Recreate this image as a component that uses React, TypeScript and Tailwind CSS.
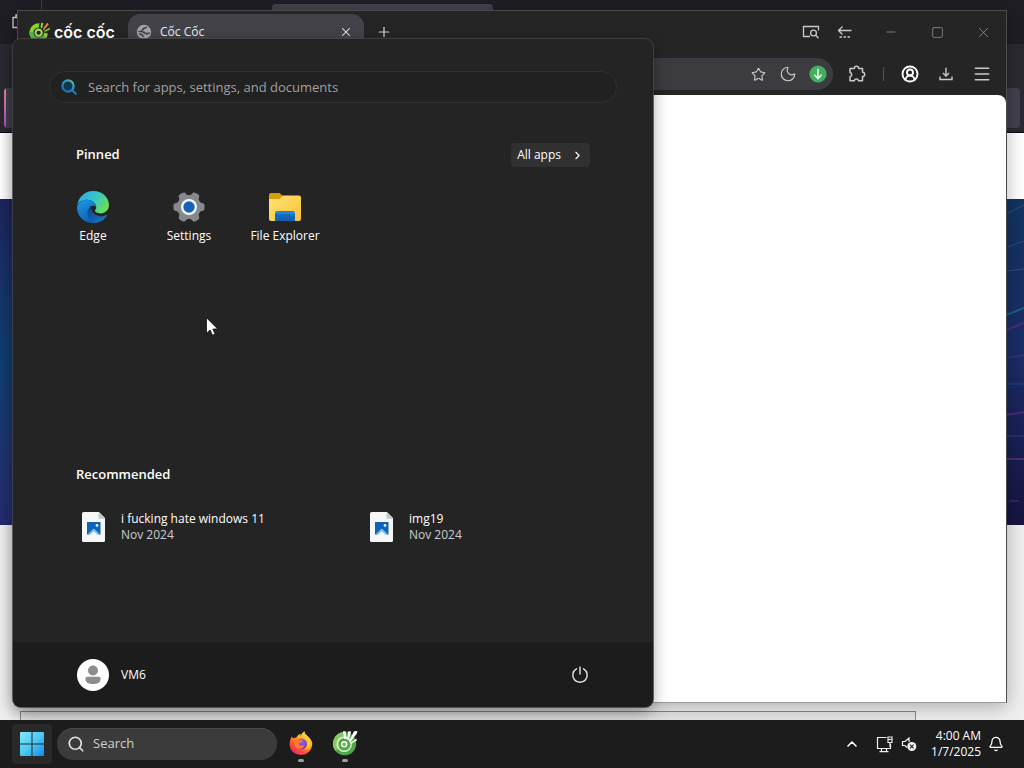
import React from "react";
import {
  Bell,
  ChevronRight,
  ChevronUp,
  CircleUserRound,
  Menu,
  Minus,
  Moon,
  Plus,
  Search,
  Square,
  Star,
  X,
} from "lucide-react";

function CocCocMark({ className }: { className: string }) {
  return (
    <svg viewBox="0 0 24 24" className={className} aria-hidden="true">
      <path d="M12.500 2.600A10.200 10.200 0 1 0 21.800 14l-4.400-1.500a5.800 5.800 0 1 1-5.600-5.400Z" fill="#8bd42f" />
      <path d="M1.400 12A10.200 10.200 0 0 0 20 18l-3.700-2.300A5.800 5.800 0 0 1 5.900 12Z" fill="#4fb848" />
      <circle cx="11.600" cy="12.800" r="3.400" fill="none" stroke="#a8e04a" strokeWidth="2.200" />
      <path d="M13.600 7.200 14.600 1.800l2 .5-1.200 5.600Z" fill="#8ee53f" />
      <path d="m16 9 4.800-7 1.900 1.500L17.300 10Z" fill="#f47b50" />
      <path d="m17.700 10.600 5.800-3.200.7 1.900-6 2.700Z" fill="#7ed321" />
    </svg>
  );
}

function CocCocApp() {
  return (
    <svg viewBox="0 0 26 26" className="size-6.5" aria-hidden="true">
      <circle cx="12.600" cy="13.700" r="11.600" fill="#4fa64b" />
      <path d="M12.600 2.100a11.600 11.600 0 0 0-9 19L8 17a6.200 6.200 0 0 1 5-9.600Z" fill="#8cc665" />
      <circle cx="12.200" cy="14.300" r="7" fill="none" stroke="#e5f6d9" strokeWidth="1.400" />
      <circle cx="12.200" cy="14.300" r="2.600" fill="#75ba58" stroke="#f3fff0" strokeWidth="1.400" />
      <path d="m12.500 9-1.700-7.600 2.700-.3 1.200 8ZM15 9.400l1.200-8.200 3 .2-2.600 8.800ZM17 11l5-9.800 3.300-.2-.4 2.400L18 12.400Z" fill="#fff" />
      <path d="m18.400 12.800 5.700-4.200.9 1.900-6 3.600Z" fill="#e5f6d9" />
    </svg>
  );
}

function EdgeIcon() {
  return (
    <svg viewBox="0 0 32 32" className="size-8" aria-hidden="true">
      <defs>
        <linearGradient id="edge-top" x1="0" y1="0.2" x2="1" y2="0.7">
          <stop offset="0" stopColor="#2fa9e8" />
          <stop offset="0.5" stopColor="#35c8c5" />
          <stop offset="1" stopColor="#6fe04b" />
        </linearGradient>
        <linearGradient id="edge-left" x1="0" y1="0" x2="0.5" y2="1">
          <stop offset="0" stopColor="#1f9be5" />
          <stop offset="1" stopColor="#0f5fb5" />
        </linearGradient>
        <linearGradient id="edge-low" x1="0" y1="0" x2="1" y2="1">
          <stop offset="0" stopColor="#10438a" />
          <stop offset="1" stopColor="#1a78c9" />
        </linearGradient>
      </defs>
      <path d="M.3 14.5C1.2 6.2 7.800 0 16 0c9 0 16 6.200 16 14 0 5-4 8.400-8.400 8.400-3.700 0-5.600-1.400-5.600-2.600 0-.9 1.200-1.300 1.200-3.700 0-3.300-3.300-7.300-9-7.300C5.500 8.800 1.500 11 .3 14.500Z" fill="url(#edge-top)" />
      <path d="M.2 15.500C1.700 11.200 5.700 8.800 10.200 8.800c5.700 0 9 4 9 7.300-2-2.200-7.300-1.800-7.500 3.600-.2 5.600 4.300 11.100 8.600 11.700C9.500 34.300-.8 26 .2 15.500Z" fill="url(#edge-left)" />
      <path d="M13.500 15.600c-6 5.200-2.900 15.200 5.700 16.100 4.600-.1 8.500-3.300 10.800-6.900.4-.7-.2-1.100-.8-.7-6.800 3.600-14.800-.7-15.700-8.500Z" fill="url(#edge-low)" />
    </svg>
  );
}

const gearTeeth = [30, 90, 150, 210, 270, 330];

function SettingsIcon() {
  return (
    <svg viewBox="0 0 32 32" className="size-8" aria-hidden="true">
      <g fill="#85898d">
        {gearTeeth.map((angle) => (
          <path key={angle} d="M10.800 6.500 12.700.9q3.300-1 6.600 0l1.900 5.600Z" transform={`rotate(${angle} 16 16)`} />
        ))}
        <circle cx="16" cy="16" r="12" />
      </g>
      <circle cx="16" cy="16" r="8" fill="#f3f6fa" />
      <circle cx="16" cy="16" r="5.700" fill="#1762b5" />
    </svg>
  );
}

function FolderIcon() {
  return (
    <svg viewBox="0 0 32 32" className="size-8" aria-hidden="true">
      <defs>
        <linearGradient id="folder-front" x1="0" y1="0" x2="1" y2="1">
          <stop offset="0" stopColor="#ffe27a" />
          <stop offset="1" stopColor="#fbc22e" />
        </linearGradient>
      </defs>
      <path d="M0 4q0-2 2-2h8.500L14 5v8H0Z" fill="#d89b0c" />
      <path d="M0 8h10.500L14 4.500h16q2 0 2 2V28q0 2-2 2H2q-2 0-2-2Z" fill="url(#folder-front)" />
      <path d="M6 30v-7q0-3 3-3h14q3 0 3 3v7Z" fill="#1468bb" />
      <path d="M8 20.200h16q2 .3 2 3H6q0-2.700 2-3Z" fill="#2684d8" />
      <path d="M9 27h14v3H9Z" fill="#1160b0" />
    </svg>
  );
}

function ImageFileIcon() {
  return (
    <svg viewBox="0 0 24 30" className="h-7.5 w-6" aria-hidden="true">
      <path d="M1.500 0H17l6 6v22.500q0 1.500-1.500 1.500h-20Q0 30 0 28.500v-27Q0 0 1.500 0Z" fill="#f6f7f8" />
      <path d="M16.500 0 23 6.700h-5q-1.500 0-1.500-1.500Z" fill="#c5c8ca" />
      <path d="M5 10h13.500v13l-6.700-6.300L5 23Z" fill="#0f62b4" />
      <path d="m5 23 6.800-6.400 6.700 6.400-2.500.1-4.200-4-4.300 4Z" fill="#70b8ee" />
      <circle cx="15" cy="13.500" r="1.400" fill="#dceffc" />
    </svg>
  );
}

function StartSearchIcon() {
  return (
    <svg viewBox="0 0 18 18" className="size-4.5" fill="none" aria-hidden="true">
      <defs>
        <linearGradient id="lens" x1="0.9" y1="0" x2="0.1" y2="1">
          <stop offset="0" stopColor="#4bc3a0" />
          <stop offset="0.5" stopColor="#278fc2" />
          <stop offset="1" stopColor="#1d63bf" />
        </linearGradient>
      </defs>
      <circle cx="8" cy="8" r="5.600" fill="#16354a" stroke="url(#lens)" strokeWidth="2.200" />
      <path d="m12.300 12.300 3.500 3.500" stroke="#1f78c8" strokeWidth="2.200" strokeLinecap="round" />
    </svg>
  );
}

function GlobeIcon() {
  return (
    <svg viewBox="0 0 16 16" className="size-4" aria-hidden="true">
      <circle cx="8" cy="8" r="7.200" fill="#a4a4a8" />
      <path d="M2.200 7.500h3.300l2-3L11 3.200M6.200 8.200c3.200-.4 2.800 2 4.800 1.600l2.800-.9M3 10.200c2.500-.3 3.500.3 4.500 2.800" fill="none" stroke="#45454b" strokeWidth="1.700" />
    </svg>
  );
}

function TabSearchIcon() {
  return (
    <svg viewBox="0 0 18 14" className="h-3.5 w-4.5" fill="none" stroke="#c9c9c9" strokeWidth="1.300" aria-hidden="true">
      <path d="M8 11.500H1.500v-10h15v4" />
      <circle cx="11.500" cy="8" r="2.900" />
      <path d="m13.700 10.200 2.800 3" />
    </svg>
  );
}

function SidebarBackIcon() {
  return (
    <svg viewBox="0 0 16 14" className="h-3.5 w-4" fill="none" stroke="#c9c9c9" strokeWidth="1.300" aria-hidden="true">
      <path d="M14.500 5.500H2M5.500 1.500l-4 4 4 4" />
      <path d="M2.500 12h12" strokeDasharray="2.500 1.500" />
    </svg>
  );
}

function PuzzleIcon() {
  return (
    <svg viewBox="0 0 18 18" className="size-4.5" fill="none" stroke="#c9c9c9" strokeWidth="1.500" strokeLinejoin="round" aria-hidden="true">
      <path d="M2 3.500h4.300a2.200 2.200 0 0 1 4.400 0H14.500V7.200a2.200 2.200 0 0 1 0 4.400V15.800H10.600a2.200 2.200 0 0 0-4.300 0H2V11.700a2.200 2.200 0 0 0 0-4.300Z" />
    </svg>
  );
}

function GreenDownload() {
  return (
    <svg viewBox="0 0 18 18" className="size-4.5" aria-hidden="true">
      <circle cx="9" cy="9" r="8.600" fill="#45ad60" />
      <path d="M9 3.800v9.500M5.300 9.800 9 13.500l3.700-3.700" fill="none" stroke="#e8ffe9" strokeWidth="1.600" />
    </svg>
  );
}

function DownloadTray() {
  return (
    <svg viewBox="0 0 14 14" className="size-3.5" fill="none" stroke="#c9c9c9" strokeWidth="1.400" aria-hidden="true">
      <path d="M7 .8v8M4 6l3 3 3-3M1 9.500v3h12v-3" />
    </svg>
  );
}

function PowerIcon() {
  return (
    <svg viewBox="0 0 18 18" className="size-4.5" fill="none" stroke="#e8e8e8" strokeWidth="1.400" strokeLinecap="round" aria-hidden="true">
      <path d="M9 1v7M5.500 2.800a7.200 7.200 0 1 0 7 0" />
    </svg>
  );
}

function WindowsLogo() {
  return (
    <svg viewBox="0 0 24 24" className="size-6" aria-hidden="true">
      <defs>
        <linearGradient id="win" gradientUnits="userSpaceOnUse" x1="0" y1="0" x2="24" y2="24">
          <stop offset="0" stopColor="#83e6fb" />
          <stop offset="0.500" stopColor="#4bcaf4" />
          <stop offset="1" stopColor="#1689e8" />
        </linearGradient>
      </defs>
      <path d="M1 0h10.500v11.500H0V1q0-1 1-1ZM12.500 0H23q1 0 1 1v10.500H12.500ZM0 12.500h11.500V24H1q-1 0-1-1ZM12.500 12.500H24V23q0 1-1 1H12.500Z" fill="url(#win)" />
    </svg>
  );
}

function FirefoxIcon() {
  return (
    <svg viewBox="0 0 24 24" className="size-6" aria-hidden="true">
      <defs>
        <linearGradient id="fox" x1="0.9" y1="0" x2="0.200" y2="1">
          <stop offset="0" stopColor="#fff15a" />
          <stop offset="0.400" stopColor="#ffad22" />
          <stop offset="0.700" stopColor="#ff5434" />
          <stop offset="1" stopColor="#e4206d" />
        </linearGradient>
        <radialGradient id="fox-globe" cx="0.500" cy="0.300" r="0.8">
          <stop offset="0" stopColor="#a45af4" />
          <stop offset="1" stopColor="#5936b5" />
        </radialGradient>
      </defs>
      <path d="M2.800 5.200q.3 1.300 1.300 1.900 1.500-.6 3-.3Q9 3.300 12 3q-.8 1.500-.4 2.500Q12.500 2.200 15.200.2q.2 2.600 3.200 4.800Q24 9.200 23.200 14.300 21.700 23.500 12 24 1.500 23.500.5 13.500.200 9.500 2.800 5.200Z" fill="url(#fox)" />
      <circle cx="12.500" cy="13" r="5.400" fill="url(#fox-globe)" />
      <path d="M4.500 8q4-1.800 6 .7 2.300.1 3.200 1.200-1 1.300-3.300 1.800-1.100 1.100-.3 2.300 3 1.700 5.800-.2-1.400 4.200-5.600 4.200-5.800-.8-5.800-10Z" fill="#ff7a29" />
      <path d="M15 5.500q4.800 4.200 3.400 9.200-.8 2.800-3 4 6-.8 6.300-6.200Q21.500 8 18.400 5Q16 3.500 15.200.2 13.500 3 15 5.500Z" fill="#ffcb35" />
    </svg>
  );
}

function NetworkIcon() {
  return (
    <svg viewBox="0 0 17 17" className="size-4.25" fill="none" stroke="#eee" strokeWidth="1.200" aria-hidden="true">
      <path d="M10.500 1.500h-9v11h13V8M5.500 12.500v3M10.500 12.500v3M3.500 15.700h9" />
      <path d="M12 1h4v5.500h-4ZM12 3.500h4M14 6.500V11" />
    </svg>
  );
}

function MutedIcon() {
  return (
    <svg viewBox="0 0 16 16" className="size-4" aria-hidden="true">
      <path d="M6 11.500 4 9.500H1.500v-4H4L8 2v4" fill="none" stroke="#eee" strokeWidth="1.200" />
      <circle cx="10.800" cy="10.500" r="4.500" fill="#f1f1f1" />
      <path d="m9 8.700 3.600 3.600m0-3.600L9 12.300" stroke="#202020" strokeWidth="1.100" />
    </svg>
  );
}

function BackgroundBrowser() {
  return (
    <div className="absolute inset-0 flex flex-col bg-[#efefef]">
      <div className="flex h-11 shrink-0 bg-[#1f1e25]">
        <div className="flex w-[42px] items-center border-r border-[#3b3a42] pl-3">
          <svg viewBox="0 0 14 16" className="h-4 w-3.5" fill="none" stroke="#d0d0d5" strokeWidth="1.300" aria-hidden="true">
            <path d="M8 3.500H1v10h9M4 3.500V1h5" />
          </svg>
        </div>
        <div className="mt-1 ml-[230px] w-[221px] rounded-t bg-[#42414d]" />
      </div>
      <div className="flex h-[89px] shrink-0 items-end justify-between border-b border-[#0c0c0d] bg-[#2b2a33] pb-1">
        <div className="ml-1 h-10 w-5 rounded-l bg-linear-to-b from-[#f58a86] to-[#a34fd0] pl-0.5">
          <div className="h-full bg-[#42414d]" />
        </div>
        <div className="mr-1 h-10 w-16 rounded bg-[#42414d]" />
      </div>
      <div className="h-[66px] shrink-0 bg-white" />
      <div className="flex h-[326px] shrink-0 justify-between">
        <div className="w-1/2 bg-linear-to-b from-[#1d265f] via-[#103f72] to-[#252c70]" />
        <div className="w-1/2 bg-linear-to-b from-[#123460] via-[#1b2c66] to-[#15153f]">
          <svg viewBox="0 0 18 326" className="ml-auto h-full w-4.5" fill="none" aria-hidden="true">
            <path d="m0 15 18-9M2 48l16-6M0 72l18-2" stroke="#275180" />
            <path d="m0 116 18-7" stroke="#1a5d85" strokeWidth="2" />
            <path d="m0 131 18-7M0 216l18-3M0 260h18" stroke="#4b2b7c" strokeWidth="2" />
            <path d="m0 159 18-3M0 185h18M0 237h18M3 302h10" stroke="#2b4384" />
          </svg>
        </div>
      </div>
    </div>
  );
}

function CocCocWindow() {
  return (
    <section
      aria-label="Cốc Cốc"
      className="absolute inset-x-[17px] top-2.5 bottom-[17px] flex flex-col border border-[#4b4b4d] border-b-[#999] bg-[#252525] shadow-[0_4px_18px_rgba(0,0,0,0.28)]"
    >
      <header className="flex h-[47px] shrink-0 items-start pt-[3px]">
        <div className="flex h-9 w-[110px] items-center gap-1 pl-2.5 text-white">
          <CocCocMark className="size-5.5 shrink-0" />
          <span className="font-['Inter'] text-base leading-5 font-semibold whitespace-nowrap">cốc cốc</span>
        </div>
        <div className="flex h-9 w-[236px] items-center rounded-t-xl bg-[#424248] px-2 text-xs text-[#eee]">
          <GlobeIcon />
          <span className="ml-2 flex-1">Cốc Cốc</span>
          <button aria-label="Close tab" className="grid size-5 place-items-center">
            <X size={14} strokeWidth={1.800} />
          </button>
        </div>
        <button aria-label="New tab" className="grid h-9 w-10 place-items-center text-[#d2d2d2]">
          <Plus size={16} strokeWidth={1.800} />
        </button>
        <div className="ml-auto flex h-9 items-center text-[#8b8b8b]">
          <button aria-label="Search tabs" className="grid w-[22px] place-items-center"><TabSearchIcon /></button>
          <button aria-label="Show sidebar" className="grid w-[46px] place-items-center"><SidebarBackIcon /></button>
          <button aria-label="Minimize" className="grid w-[46px] place-items-center"><Minus size={14} strokeWidth={1.500} /></button>
          <button aria-label="Maximize" className="grid w-[46px] place-items-center"><Square size={13} strokeWidth={1.500} /></button>
          <button aria-label="Close" className="grid w-[46px] place-items-center"><X size={17} strokeWidth={1.200} /></button>
        </div>
      </header>
      <div className="flex h-[37px] shrink-0 items-start pr-1.5 text-[#c9c9c9]">
        <div className="flex h-8 flex-1 items-center justify-end rounded-r-2xl bg-[#3b3b40]">
          <button aria-label="Bookmark" className="grid w-7.5 place-items-center"><Star size={15} strokeWidth={1.800} /></button>
          <button aria-label="Dark mode" className="grid w-7.5 place-items-center"><Moon size={18} strokeWidth={1.600} /></button>
          <button aria-label="Save media" className="grid w-7.5 place-items-center"><GreenDownload /></button>
        </div>
        <div className="flex h-8 items-center pl-1.5">
          <button aria-label="Extensions" className="grid w-9 place-items-center"><PuzzleIcon /></button>
          <span className="mx-2 h-3.5 w-px bg-[#555]" />
          <button aria-label="Profile" className="grid w-9 place-items-center text-white"><CircleUserRound size={18} strokeWidth={2.500} /></button>
          <button aria-label="Downloads" className="grid w-9 place-items-center"><DownloadTray /></button>
          <button aria-label="Menu" className="grid w-9 place-items-center"><Menu size={20} strokeWidth={1.800} /></button>
        </div>
      </div>
      <main className="flex-1 rounded-t-lg bg-white" />
    </section>
  );
}

const pinned = [
  { name: "Edge", icon: <EdgeIcon /> },
  { name: "Settings", icon: <SettingsIcon /> },
  { name: "File Explorer", icon: <FolderIcon /> },
];

const recommended = [
  { name: "i fucking hate windows 11", date: "Nov 2024" },
  { name: "img19", date: "Nov 2024" },
];

function StartMenu() {
  return (
    <section
      aria-label="Start"
      className="absolute bottom-[13px] left-[13px] flex h-[668px] w-[640px] max-w-full flex-col overflow-hidden rounded-lg bg-[#242424] text-white shadow-[0_0_0_1px_rgba(70,70,70,0.8),0_6px_16px_rgba(0,0,0,0.35)]"
    >
      <label className="mx-9 mt-8 flex h-8 shrink-0 items-center gap-2.5 rounded-full border border-[#303030] bg-[#212121] pl-2.5">
        <StartSearchIcon />
        <input
          type="text"
          aria-label="Search for apps, settings, and documents"
          placeholder="Search for apps, settings, and documents"
          className="flex-1 bg-transparent pt-0.5 text-[13px] outline-none placeholder:text-[#a0a0a0]"
        />
      </label>
      <div className="mt-10 flex h-6 shrink-0 items-center justify-between px-[63px]">
        <h2 className="text-[13px] font-semibold">Pinned</h2>
        <button className="flex h-6 items-center gap-2.5 rounded bg-[#303030] px-1.5 text-xs">
          All apps
          <ChevronRight size={13} strokeWidth={2} />
        </button>
      </div>
      <div className="mt-6 flex h-[263px] shrink-0 items-start px-8">
        {pinned.map((app) => (
          <button key={app.name} className="flex w-24 flex-col items-center gap-[5px] text-xs leading-4">
            {app.icon}
            <span>{app.name}</span>
          </button>
        ))}
      </div>
      <h2 className="mt-2 px-[63px] text-[13px] leading-6 font-semibold">Recommended</h2>
      <div className="mt-[25px] flex px-[69px]">
        {recommended.map((file) => (
          <button key={file.name} className="flex w-72 shrink-0 items-center gap-[15px] text-left text-xs leading-4">
            <ImageFileIcon />
            <span className="flex flex-col">
              <span>{file.name}</span>
              <span className="text-[#cecece]">{file.date}</span>
            </span>
          </button>
        ))}
      </div>
      <footer className="mt-auto flex h-[65px] items-center justify-between bg-[#1c1c1c] px-16">
        <button className="flex items-center gap-3 text-xs">
          <svg viewBox="0 0 32 32" className="size-8" aria-hidden="true">
            <circle cx="16" cy="16" r="16" fill="#fff" />
            <circle cx="16" cy="11.500" r="5" fill="#8d8d8d" />
            <path d="M10.300 17.800h11.400q2 0 2 2 0 5.200-7.700 5.200t-7.700-5.200q0-2 2-2Z" fill="#8d8d8d" />
          </svg>
          VM6
        </button>
        <button aria-label="Power"><PowerIcon /></button>
      </footer>
    </section>
  );
}

function Taskbar() {
  return (
    <footer className="flex h-12 shrink-0 items-center bg-[#1c1c1c] pr-5 pl-3 text-white">
      <button aria-label="Start" className="grid size-10 place-items-center rounded bg-[#292929]"><WindowsLogo /></button>
      <label className="ml-[5px] flex h-8 w-[220px] items-center gap-2 rounded-full bg-[#3b3b3b] px-2.5 shadow-[inset_0_1px_#484848]">
        <Search size={18} strokeWidth={2.200} className="shrink-0 text-[#e4e4e4]" />
        <input type="text" aria-label="Search" placeholder="Search" className="min-w-0 flex-1 bg-transparent text-[13px] outline-none placeholder:text-[#cfcfcf]" />
      </label>
      <button aria-label="Firefox" className="ml-0.5 flex h-12 w-11 flex-col items-center justify-end gap-1 pb-1.5">
        <FirefoxIcon />
        <span className="h-[3px] w-1.5 rounded-full bg-[#a0a0a0]" />
      </button>
      <button aria-label="Cốc Cốc" className="flex h-12 w-11 flex-col items-center justify-end gap-[3px] pb-1.5">
        <CocCocApp />
        <span className="h-[3px] w-1.5 rounded-full bg-[#a0a0a0]" />
      </button>
      <div className="ml-auto flex items-center">
        <button aria-label="Show hidden icons" className="mr-4"><ChevronUp size={16} strokeWidth={2.400} /></button>
        <button aria-label="Network and volume" className="mr-3.5 flex items-center gap-2"><NetworkIcon /><MutedIcon /></button>
        <button className="mr-[7px] text-right text-xs leading-4">
          4:00 AM
          <br />
          1/7/2025
        </button>
        <button aria-label="Notifications"><Bell size={16} strokeWidth={1.900} /></button>
      </div>
    </footer>
  );
}

export default function App() {
  return (
    <div className="flex h-screen flex-col overflow-hidden bg-[#1c1c1c] font-['Open_Sans','Noto_Sans',sans-serif]">
      <div className="relative min-h-0 flex-1 overflow-hidden">
        <BackgroundBrowser />
        <div className="absolute right-[108px] bottom-0 left-5 h-[9px] border border-b-0 border-[#888] bg-[#e4e4e4]" />
        <CocCocWindow />
        <StartMenu />
        <svg viewBox="0 0 12 19" className="absolute top-[317px] left-[206px] h-[19px] w-3" aria-hidden="true">
          <path d="M.5.8v15.500l3.600-3.400 2.300 5.300 2.700-1.200-2.300-5h4.900Z" fill="#fff" stroke="#111" strokeWidth=".8" />
        </svg>
      </div>
      <Taskbar />
    </div>
  );
}
